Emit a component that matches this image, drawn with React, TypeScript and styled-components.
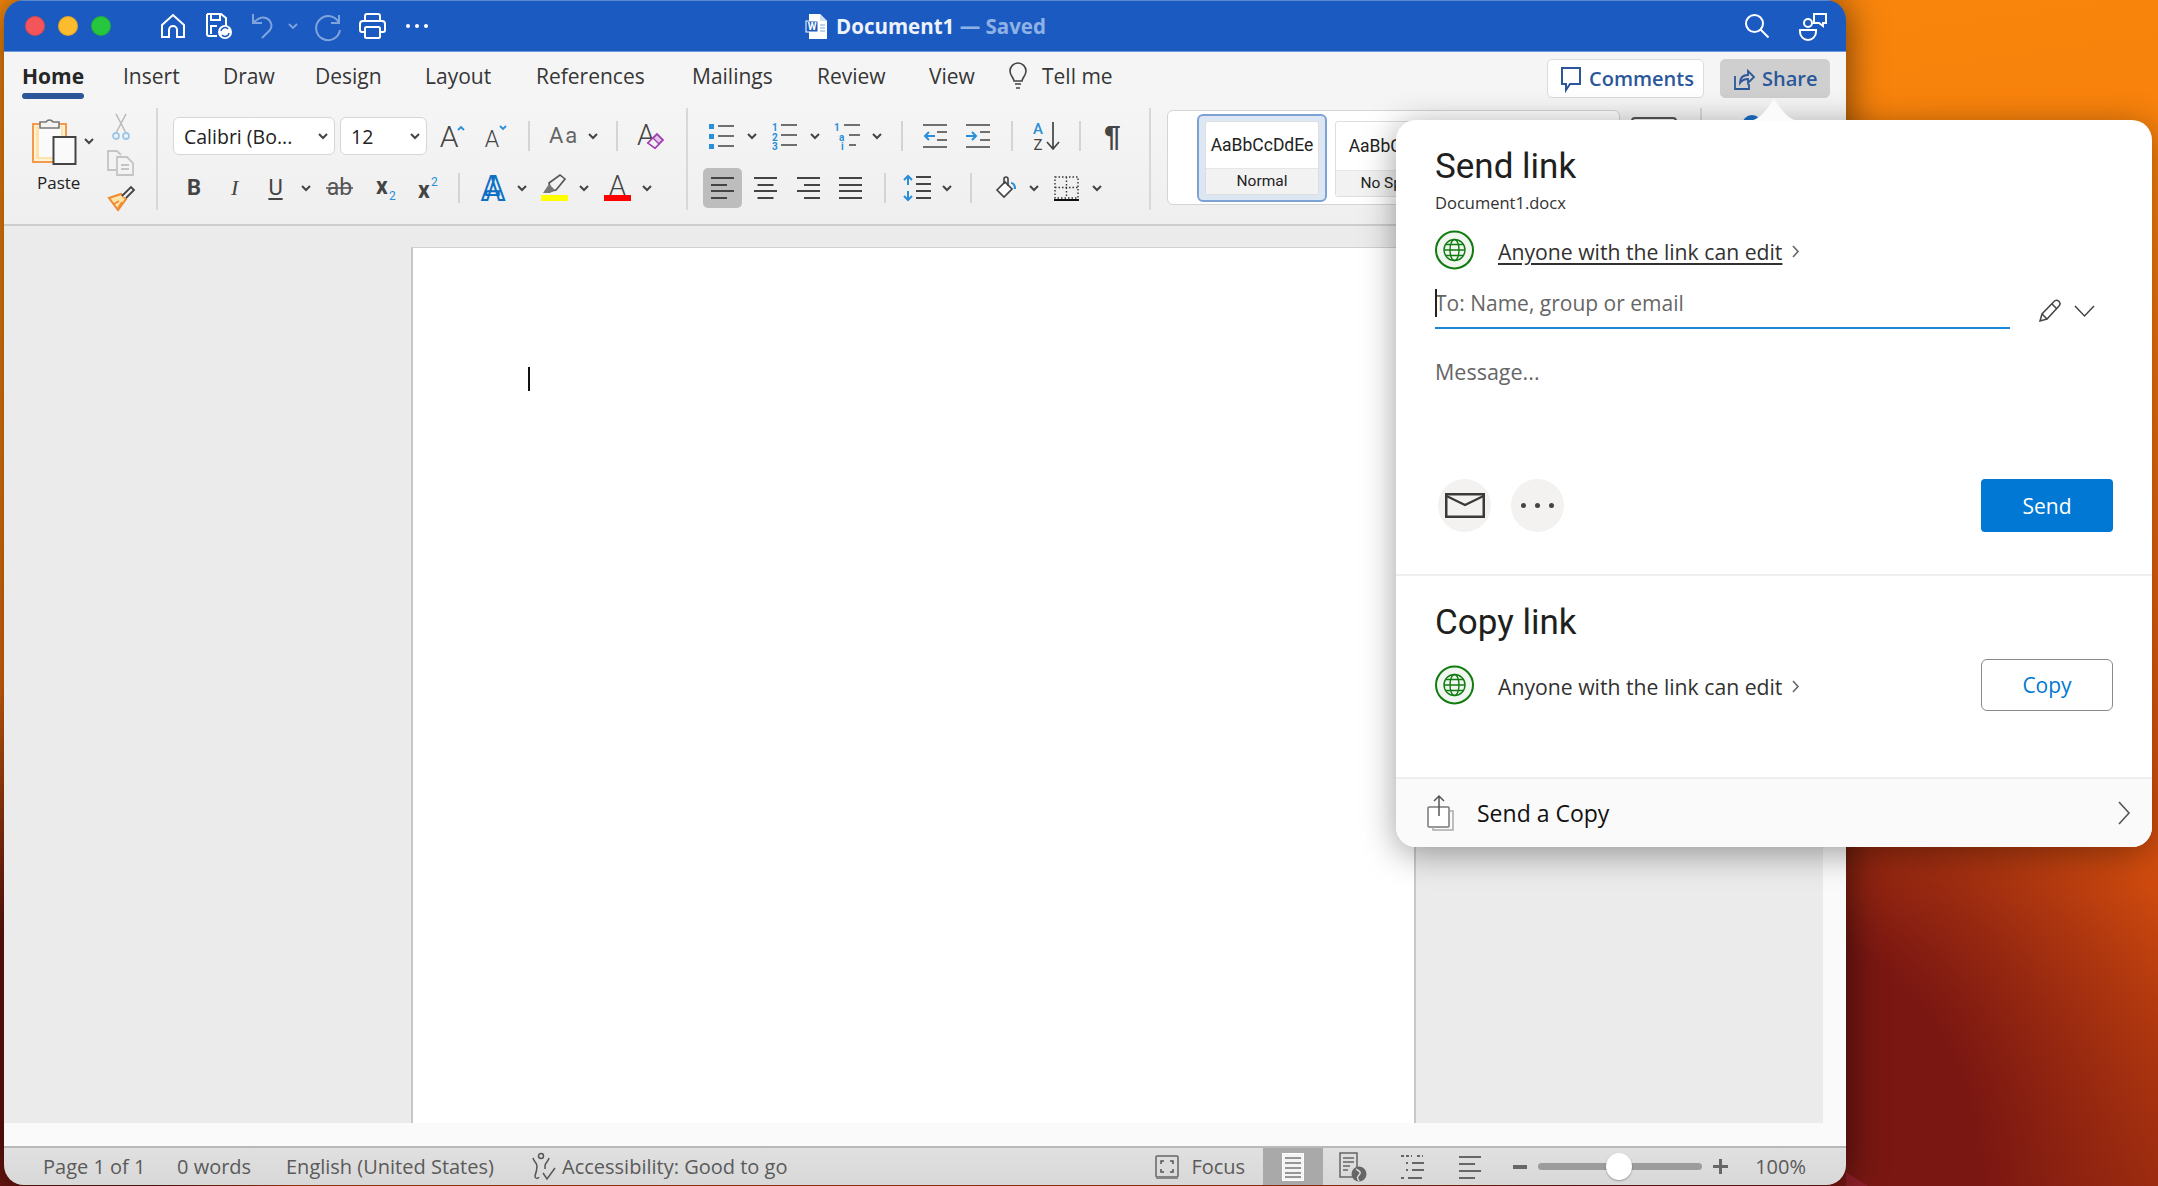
import React from "react";
import styled, { createGlobalStyle } from "styled-components";

const GlobalStyle = createGlobalStyle`
	html, body {
		margin: 0;
		padding: 0;
		width: 2158px;
		height: 1186px;
		overflow: hidden;
		font-family: "Open Sans", "Liberation Sans", sans-serif;
		color: #333;
	}
	svg {
		display: block;
		overflow: visible;
	}
	svg text {
		font-family: Roboto, "Liberation Sans", sans-serif;
	}
`;

const BLUE = "#2a8fd8";

/* small drawings */

function Chev() {
	return (
		<svg width="10" height="6" viewBox="0 0 10 6">
			<polyline points="1,1 5,5 9,1" fill="none" stroke="#444" strokeWidth="2" />
		</svg>
	);
}

function WordDoc() {
	return (
		<svg width="21" height="25" viewBox="0 0 21 25">
			<path d="M3 0h11l7 7v18H3z" fill="#fff" />
			<path d="M14 0v7h7" fill="#cfdcf2" />
			<rect x="0" y="7" width="12" height="11" fill="#1b5ac0" stroke="#fff" strokeWidth="1" />
			<text x="6" y="16" fontSize="10" fontWeight="700" fill="#fff" textAnchor="middle">W</text>
			<path d="M14 11h5M14 14h5M14 17h5" stroke="#7ea3df" strokeWidth="1.2" />
		</svg>
	);
}

function HomeIcon() {
	return (
		<svg width="24" height="24" viewBox="0 0 24 24" fill="none" stroke="#fff" strokeWidth="2">
			<path d="M1 11 12 1l11 10v12h-7v-7a4 4 0 0 0-8 0v7H1z" />
		</svg>
	);
}

function SaveIcon() {
	return (
		<svg width="26" height="26" viewBox="0 0 26 26" fill="none" stroke="#fff" strokeWidth="2">
			<path d="M1 1h14l5 4v8M11 23H3a2 2 0 0 1-2-2V1" />
			<path d="M5 1v6h9V1M5 21v-8h6" />
			<circle cx="19" cy="19" r="7" fill="#fff" stroke="none" />
			<path d="M15 18a4 4 0 0 1 7-2M23 20a4 4 0 0 1-7 2" stroke="#1b5ac0" strokeWidth="1.6" />
		</svg>
	);
}

function UndoIcon() {
	return (
		<svg width="21" height="26" viewBox="0 0 21 26" fill="none" stroke="#7fa3dd" strokeWidth="2">
			<path d="M1 1v9h9" />
			<path d="M1 10C5 6 9 3 14 5c5 2 7 8 4 12l-8 8" />
		</svg>
	);
}

function RedoIcon() {
	return (
		<svg width="26" height="26" viewBox="0 0 26 26" fill="none" stroke="#7fa3dd" strokeWidth="2">
			<path d="M24 2v8h-8" />
			<path d="M24 10A12 12 0 1 0 25 17" />
		</svg>
	);
}

function PrintIcon() {
	return (
		<svg width="27" height="26" viewBox="0 0 27 26" fill="none" stroke="#fff" strokeWidth="2">
			<path d="M6 8V3a2 2 0 0 1 2-2h11a2 2 0 0 1 2 2v5" />
			<path d="M6 19H3a2 2 0 0 1-2-2v-6a3 3 0 0 1 3-3h19a3 3 0 0 1 3 3v6a2 2 0 0 1-2 2h-3" />
			<rect x="6" y="14" width="15" height="11" rx="1.5" />
		</svg>
	);
}

function DotsIcon() {
	return (
		<svg width="22" height="4" viewBox="0 0 22 4" fill="#fff">
			<circle cx="2" cy="2" r="2" />
			<circle cx="11" cy="2" r="2" />
			<circle cx="20" cy="2" r="2" />
		</svg>
	);
}

function SearchIcon() {
	return (
		<svg width="24" height="24" viewBox="0 0 24 24" fill="none" stroke="#fff" strokeWidth="2">
			<circle cx="9.5" cy="9.5" r="8.5" />
			<path d="m15.5 15.5 8 8" />
		</svg>
	);
}

function PeopleIcon() {
	return (
		<svg width="28" height="27" viewBox="0 0 28 27" fill="none" stroke="#fff" strokeWidth="2">
			<path d="M15 1h12v9h-3v3l-4-3h-5z" />
			<circle cx="9" cy="10" r="4" />
			<path d="M1 17h16v2a7 7 0 0 1-16 0z" />
		</svg>
	);
}

function BulbIcon() {
	return (
		<svg width="18" height="26" viewBox="0 0 18 26" fill="none" stroke="#444" strokeWidth="1.6">
			<path d="M5 18c0-3-4-5-4-10a8 8 0 0 1 16 0c0 5-4 7-4 10z" />
			<path d="M6 21h6M7 25h4" />
		</svg>
	);
}

function CommentIcon() {
	return (
		<svg width="20" height="26" viewBox="0 0 20 26" fill="none" stroke="#2b579a" strokeWidth="2">
			<path d="M1 2h18v16H9l-4 6v-6H1z" />
		</svg>
	);
}

function ShareIcon() {
	return (
		<svg width="20" height="22" viewBox="0 0 20 22" fill="none" stroke="#2b579a" strokeWidth="1.8">
			<path d="M1 8v13h14v-5" />
			<path d="M6 15c0-6 4-8 8-8V3l6 6-6 6v-4c-4 0-6 1-8 4z" />
		</svg>
	);
}

function ClipboardIcon() {
	return (
		<svg width="44" height="49" viewBox="0 0 44 49">
			<rect x="1" y="8" width="33" height="38" fill="#fff3d6" stroke="#f39a4b" strokeWidth="2" />
			<rect x="4" y="10" width="27" height="33" fill="#fde3a7" />
			<rect x="7" y="11" width="22" height="30" fill="#fafafa" />
			<path d="M8 12V6h6a4 4 0 0 1 7 0h6v6z" fill="#f4f4f4" stroke="#777" strokeWidth="1.6" />
			<rect x="21.5" y="21" width="22" height="27" fill="#fafafa" stroke="#444" strokeWidth="2" />
		</svg>
	);
}

function CutIcon() {
	return (
		<svg width="18" height="26" viewBox="0 0 18 26" fill="none">
			<path d="M4 19 14 0M14 19 4 0" stroke="#bbb" strokeWidth="1.6" />
			<circle cx="4" cy="22" r="3" stroke="#9cc8e8" strokeWidth="1.8" />
			<circle cx="14" cy="22" r="3" stroke="#9cc8e8" strokeWidth="1.8" />
		</svg>
	);
}

function CopyIcon() {
	return (
		<svg width="27" height="26" viewBox="0 0 27 26" fill="none" stroke="#c4c4c4" strokeWidth="1.8">
			<path d="M9 20H1V1h9l4 4" />
			<path d="M10 7h10l6 6v12H10z" fill="#f3f3f3" />
			<path d="M14 15h8M14 19h8" />
		</svg>
	);
}

function PainterIcon() {
	return (
		<svg width="27" height="25" viewBox="0 0 27 25">
			<path d="M1 12 13 8l5 5-8 11z" fill="#fde3a7" stroke="#f08a33" strokeWidth="2" />
			<path d="M6 18l5-3M10 22l4-6" stroke="#f08a33" strokeWidth="1.6" />
			<path d="M14 10l9-9 3 3-8 8" fill="#f3f3f3" stroke="#444" strokeWidth="1.8" />
		</svg>
	);
}

function GrowIcon() {
	return (
		<svg width="24" height="22" viewBox="0 0 24 22">
			<text x="9" y="22" fontSize="30" fontWeight="300" fill="#444" textAnchor="middle">A</text>
			<polyline points="18,5 21,2 24,5" fill="none" stroke={BLUE} strokeWidth="1.8" />
		</svg>
	);
}

function ShrinkIcon() {
	return (
		<svg width="22" height="22" viewBox="0 0 22 22">
			<text x="7" y="22" fontSize="23" fontWeight="300" fill="#444" textAnchor="middle">A</text>
			<polyline points="15,1 18,4 21,1" fill="none" stroke={BLUE} strokeWidth="1.8" />
		</svg>
	);
}

function ClearIcon() {
	return (
		<svg width="27" height="26" viewBox="0 0 27 26">
			<text x="9" y="22" fontSize="29" fontWeight="300" fill="#444" textAnchor="middle">A</text>
			<path d="M11 20 20 11l6 6-8 8z" fill="#e3c6ea" stroke="#a042b0" strokeWidth="1.8" />
			<path d="M11 20l5-5 6 6-4 4z" fill="#f3f3f3" stroke="#a042b0" strokeWidth="1.4" />
		</svg>
	);
}

function StrikeIcon() {
	return (
		<svg width="27" height="22" viewBox="0 0 27 22">
			<text x="13.5" y="18" fontSize="23" fill="#555" textAnchor="middle">ab</text>
			<path d="M0 11h27" stroke="#555" strokeWidth="1.6" />
		</svg>
	);
}

function SubIcon() {
	return (
		<svg width="20" height="24" viewBox="0 0 20 24">
			<text x="0" y="18" fontSize="23" fontWeight="700" fill="#444">x</text>
			<text x="13" y="24" fontSize="12" fill={BLUE}>2</text>
		</svg>
	);
}

function SupIcon() {
	return (
		<svg width="20" height="24" viewBox="0 0 20 24">
			<text x="0" y="22" fontSize="23" fontWeight="700" fill="#444">x</text>
			<text x="13" y="10" fontSize="12" fill={BLUE}>2</text>
		</svg>
	);
}

function EffectsIcon() {
	return (
		<svg width="26" height="26" viewBox="0 0 26 26">
			<text x="13" y="25" fontSize="33" fontWeight="700" fill="#e8f2fb" stroke="#0f6fc2" strokeWidth="2" textAnchor="middle">A</text>
		</svg>
	);
}

function HighlightIcon() {
	return (
		<svg width="27" height="26" viewBox="0 0 27 26">
			<path d="M8 8 19 0l5 4-9 11-5 1z" fill="#f3f3f3" stroke="#555" strokeWidth="1.6" />
			<path d="M2 18l6-9 6 6-5 3z" fill="#777" />
			<rect x="0" y="20" width="27" height="6" fill="#ffff00" />
		</svg>
	);
}

function FontColorIcon() {
	return (
		<svg width="27" height="26" viewBox="0 0 27 26">
			<text x="13.5" y="20" fontSize="27" fontWeight="300" fill="#444" textAnchor="middle">A</text>
			<rect x="0" y="20" width="27" height="6" fill="#ff0000" />
		</svg>
	);
}

function BulletsIcon() {
	return (
		<svg width="25" height="25" viewBox="0 0 25 25">
			<rect x="0" y="0" width="5" height="5" fill={BLUE} />
			<rect x="0" y="10" width="5" height="5" fill={BLUE} />
			<rect x="0" y="20" width="5" height="5" fill={BLUE} />
			<path d="M9 2h16M9 12h16M9 22h16" stroke="#444" strokeWidth="1.7" />
		</svg>
	);
}

function NumbersIcon() {
	return (
		<svg width="25" height="26" viewBox="0 0 25 26">
			<g fill={BLUE} fontSize="10" fontWeight="700">
				<text x="0" y="8">1</text>
				<text x="0" y="18">2</text>
				<text x="0" y="27">3</text>
			</g>
			<path d="M9 2h16M9 12h16M9 22h16" stroke="#444" strokeWidth="1.7" />
		</svg>
	);
}

function MultiIcon() {
	return (
		<svg width="26" height="26" viewBox="0 0 26 26">
			<g fill={BLUE} fontSize="10" fontWeight="700">
				<text x="0" y="8">1</text>
				<text x="5" y="18">a</text>
				<text x="7" y="27">i</text>
			</g>
			<path d="M10 2h16M15 12h11M15 22h7" stroke="#444" strokeWidth="1.7" />
		</svg>
	);
}

function IndentIcon({ out }: { out?: boolean }) {
	return (
		<svg width="24" height="24" viewBox="0 0 24 24">
			<path d="M0 1h24M0 23h24M14 8h10M14 16h10" stroke="#444" strokeWidth="1.7" fill="none" />
			{out ? (
				<path d="M12 12H2m4-4-4 4 4 4" stroke={BLUE} strokeWidth="2" fill="none" />
			) : (
				<path d="M0 12h10M6 8l4 4-4 4" stroke={BLUE} strokeWidth="2" fill="none" />
			)}
		</svg>
	);
}

function SortIcon() {
	return (
		<svg width="28" height="28" viewBox="0 0 28 28">
			<text x="6" y="12" fontSize="15" fontWeight="500" fill={BLUE} textAnchor="middle">A</text>
			<text x="6" y="28" fontSize="15" fontWeight="400" fill="#444" textAnchor="middle">Z</text>
			<path d="M21 0v26M15 20l6 7 6-7" stroke="#444" strokeWidth="1.7" fill="none" />
		</svg>
	);
}

function AlignIcon({ kind }: { kind: "left" | "center" | "right" | "full" }) {
	const short = kind === "full" ? 23 : 16;
	const x1 = kind === "left" || kind === "full" ? 0 : kind === "center" ? 3.5 : 7;
	const x2 = x1 + short;
	return (
		<svg width="23" height="22" viewBox="0 0 23 22">
			<path
				d={`M0 1H23M${x1} 8H${x2}M0 14H23M${x1} 21H${x2}`}
				stroke="#444"
				strokeWidth="1.8"
				fill="none"
			/>
		</svg>
	);
}

function LineSpacingIcon() {
	return (
		<svg width="27" height="26" viewBox="0 0 27 26">
			<path d="M12 2h15M12 9h15M12 16h15M12 23h15" stroke="#444" strokeWidth="1.8" />
			<path d="M4 1v9M0 5l4-4 4 4M4 16v9M0 21l4 4 4-4" stroke={BLUE} strokeWidth="2" fill="none" />
		</svg>
	);
}

function ShadingIcon() {
	return (
		<svg width="20" height="22" viewBox="0 0 20 22">
			<path d="M1 13 9 5l7 7-8 8z" fill="#fff" stroke="#444" strokeWidth="1.7" />
			<path d="M8 7V2a2 2 0 0 1 4 0v7" fill="none" stroke="#444" strokeWidth="1.6" />
			<path d="M15 6c2 0 4 2 4 6" fill="none" stroke={BLUE} strokeWidth="2.2" />
		</svg>
	);
}

function BorderIcon() {
	return (
		<svg width="25" height="25" viewBox="0 0 25 25" fill="none">
			<path d="M1 1h23v21H1zM12.5 1v21M1 11.5h23" stroke="#333" strokeWidth="1.4" strokeDasharray="1.5 2" />
			<path d="M0 24h25" stroke="#111" strokeWidth="2" />
		</svg>
	);
}

function GlobeIcon() {
	return (
		<svg width="39" height="40" viewBox="0 0 39 40" fill="none">
			<circle cx="19.5" cy="20" r="18.5" fill="#f1f6f1" stroke="#107c10" strokeWidth="2" />
			<g stroke="#107c10" strokeWidth="1.4">
				<circle cx="19.5" cy="20" r="10.5" />
				<ellipse cx="19.5" cy="20" rx="4.5" ry="10.5" />
				<path d="M9 20h21M10.5 14.5h18M10.5 25.5h18" />
			</g>
		</svg>
	);
}

function ThinChevronRight({ w, h, color }: { w: number; h: number; color: string }) {
	return (
		<svg width={w} height={h} viewBox={`0 0 ${w} ${h}`}>
			<polyline points={`1,1 ${w - 1},${h / 2} 1,${h - 1}`} fill="none" stroke={color} strokeWidth="1.6" />
		</svg>
	);
}

function PencilIcon() {
	return (
		<svg width="22" height="22" viewBox="0 0 22 22" fill="none" stroke="#444" strokeWidth="1.5">
			<path d="M1 21l2-7L15 1.500a2.500 2.500 0 0 1 5 4.500L8 19z" />
			<path d="M3 14l5 5M13 4l5 5" />
		</svg>
	);
}

function MailIcon() {
	return (
		<svg width="40" height="25" viewBox="0 0 40 25" fill="none" stroke="#3a3a3a">
			<rect x="1.250" y="1.250" width="37.500" height="22.500" strokeWidth="2.500" />
			<path d="M1.500 3 20 12 38.500 3" strokeWidth="2.200" />
		</svg>
	);
}

function SendCopyIcon() {
	return (
		<svg width="27" height="36" viewBox="0 0 27 36" fill="none" stroke="#777" strokeWidth="1.5">
			<rect x="1" y="12" width="21" height="20" rx="1" fill="#fff" />
			<path d="M23 16h3v19H6v-3" stroke="#aaa" />
			<path d="M12 21V1M7 6l5-5 5 5" stroke="#555" />
		</svg>
	);
}

function A11yIcon() {
	return (
		<svg width="24" height="28" viewBox="0 0 24 28" fill="none" stroke="#555" strokeWidth="1.5">
			<circle cx="9" cy="3" r="2.500" />
			<path d="M1 5c1 4 4 5 4 8 0 4-1 7-2 10 0 3 3 3 4 1M17 5c-1 4-4 5-4 8v3" />
			<path d="M11 20l4 6 8-11" />
		</svg>
	);
}

function FocusIcon() {
	return (
		<svg width="24" height="24" viewBox="0 0 24 24" fill="none">
			<rect x="1" y="1" width="22" height="21" rx="1" stroke="#666" strokeWidth="1.5" />
			<path d="M6 9V6h3M15 6h3v3M18 14v3h-3M9 17H6v-3" stroke="#555" strokeWidth="1.500" />
			<path d="M1 23.500h22" stroke="#888" strokeWidth="1" />
		</svg>
	);
}

function PrintLayoutIcon() {
	return (
		<svg width="22" height="28" viewBox="0 0 22 28">
			<rect x="0.500" y="0.500" width="21" height="27" fill="#f4f4f4" stroke="#fff" />
			<path d="M3 5h16M3 10h16M3 15h16M3 20h16M3 24h16" stroke="#777" strokeWidth="1.6" />
		</svg>
	);
}

function WebLayoutIcon() {
	return (
		<svg width="28" height="30" viewBox="0 0 28 30" fill="none">
			<path d="M1 1h17v24H1z" stroke="#666" strokeWidth="1.5" />
			<path d="M4 6h11M4 10h11M4 14h7M4 18h5" stroke="#666" strokeWidth="1.500" />
			<circle cx="20" cy="22" r="7.500" fill="#666" />
			<path d="M17 17c3 2 6 3 3 6s-1 4 0 6" stroke="#ddd" strokeWidth="1.500" />
		</svg>
	);
}

function OutlineIcon() {
	return (
		<svg width="26" height="26" viewBox="0 0 26 26" fill="none" stroke="#666" strokeWidth="1.800">
			<path d="M2 2h11M18 2h6" strokeDasharray="3 2" />
			<path d="M7 9h2M13 9h12M7 16h2M13 16h12M2 24h3M9 24h14" />
		</svg>
	);
}

function DraftIcon() {
	return (
		<svg width="22" height="24" viewBox="0 0 22 24" fill="none" stroke="#666" strokeWidth="1.800">
			<path d="M0 2h22M0 9h16M0 16h22M0 23h16" />
		</svg>
	);
}

/* page layout */

const Desktop = styled.div`
	position: relative;
	width: 2158px;
	height: 1186px;
	overflow: hidden;
	padding-left: 4px;
	box-sizing: border-box;
	background:
		radial-gradient(ellipse 440px 560px at 1780px 1186px, #7a1712 45%, rgba(122, 23, 18, 0) 100%),
		radial-gradient(ellipse 300px 500px at 0 1186px, #6a1410 50%, rgba(106, 20, 16, 0) 100%),
		linear-gradient(172deg, #fc8c0c 0%, #f7800c 32%, #dc530e 72%, #a8320e 100%);
`;

const WallpaperFold = styled.div`
	position: absolute;
	left: 1846px;
	top: 1172px;
	width: 22px;
	height: 14px;
	background: #8e1f28;
	clip-path: polygon(0 0, 100% 100%, 0 100%);
`;

const Window = styled.div`
	position: relative;
	width: 1842px;
	height: 1185px;
	border-radius: 20px;
	overflow: hidden;
	display: flex;
	flex-direction: column;
	box-shadow: 0 0 38px rgba(0, 0, 0, 0.6);
`;

const TitleBar = styled.div`
	flex: none;
	background: #1b5ac0;
	border-top: 1px solid #5b8ad4;
	border-bottom: 1px solid #6f9ade;
	box-sizing: border-box;
	height: 52px;
	display: grid;
	grid-template-columns: 1fr auto 1fr;
	align-items: center;
	padding: 0 19px 0 21px;
`;

const TitleLeft = styled.div`
	display: flex;
	align-items: center;
`;

const Light = styled.span<{ $c: string; $ml?: number }>`
	width: 20px;
	height: 20px;
	border-radius: 50%;
	background: ${(p) => p.$c};
	margin-left: ${(p) => p.$ml ?? 0}px;
	box-shadow: inset 0 0 0 1px rgba(0, 0, 0, 0.12);
`;

const Qat = styled.span<{ $ml: number }>`
	display: flex;
	margin-left: ${(p) => p.$ml}px;
`;

const TitleCenter = styled.div`
	display: flex;
	align-items: center;
	font-size: 20.5px;
	font-weight: 700;
	color: #eef3fb;
	gap: 9px;
`;

const Saved = styled.span`
	color: #8fb2e6;
`;

const TitleRight = styled.div`
	display: flex;
	justify-content: flex-end;
	align-items: center;
	gap: 30px;
`;

const TabsBar = styled.div`
	height: 52px;
	flex: none;
	background: #f5f5f5;
	display: flex;
	padding: 0 16px 0 18px;
`;

const Tab = styled.div<{ $active?: boolean; $w: number }>`
	position: relative;
	width: ${(p) => p.$w}px;
	height: 47px;
	line-height: 48px;
	font-size: 21px;
	white-space: nowrap;
	color: ${(p) => (p.$active ? "#262626" : "#363636")};
	font-weight: ${(p) => (p.$active ? 700 : 400)};

	${(p) =>
		p.$active &&
		`
		&::after {
			content: "";
			position: absolute;
			left: 0;
			width: 62px;
			bottom: 0;
			height: 6px;
			border-radius: 3px;
			background: #2b579a;
		}
	`}
`;

const TellMe = styled.div`
	display: flex;
	align-items: center;
	gap: 15px;
	height: 47px;
	font-size: 21px;
	color: #363636;
`;

const TabActions = styled.div`
	margin-left: auto;
	display: flex;
	gap: 16px;
	padding-top: 7px;
`;

const ActionButton = styled.div<{ $w: number; $pressed?: boolean }>`
	width: ${(p) => p.$w}px;
	height: 39px;
	box-sizing: border-box;
	border-radius: 5px;
	display: flex;
	align-items: center;
	gap: 8px;
	padding-left: 13px;
	font-size: 20px;
	font-weight: 600;
	color: #2b579a;
	background: ${(p) => (p.$pressed ? "#cfcfcf" : "#fff")};
	border: 1.5px solid ${(p) => (p.$pressed ? "#cfcfcf" : "#dcdcdc")};
`;

const Ribbon = styled.div`
	height: 122px;
	flex: none;
	box-sizing: border-box;
	background: linear-gradient(#f5f5f5, #efefef);
	border-bottom: 2px solid #cdcdcd;
	display: flex;
	padding-top: 4px;
`;

const GroupSep = styled.div<{ $ml?: number }>`
	width: 2px;
	height: 102px;
	background: #d8d8d8;
	flex: none;
	margin-left: ${(p) => p.$ml ?? 0}px;
`;

const ClipboardGroup = styled.div`
	width: 152px;
	flex: none;
	display: flex;
	padding-left: 28px;
	box-sizing: border-box;
`;

const PasteColumn = styled.div`
	width: 75px;
	flex: none;
	display: flex;
	flex-direction: column;
`;

const PasteTop = styled.div`
	display: flex;
	align-items: center;
	gap: 8px;
	padding-top: 8px;
`;

const PasteLabel = styled.div`
	font-size: 17px;
	line-height: 22px;
	margin: 7px 0 0 5px;
	color: #222;
`;

const SmallTools = styled.div`
	display: flex;
	flex-direction: column;
	padding-top: 6px;
	gap: 10px;
	align-items: flex-start;
`;

const SmallTool = styled.span<{ $ml?: number }>`
	display: flex;
	margin-left: ${(p) => p.$ml ?? 0}px;
`;

const ToolGroup = styled.div<{ $w: number; $ml?: number }>`
	width: ${(p) => p.$w}px;
	flex: none;
	margin-left: ${(p) => p.$ml ?? 0}px;
	padding-top: 2px;
`;

const ToolRow = styled.div`
	height: 52px;
	display: flex;
	align-items: center;
`;

const Slot = styled.span<{ $ml?: number }>`
	display: flex;
	align-items: center;
	flex: none;
	margin-left: ${(p) => p.$ml ?? 0}px;
`;

const LetterTool = styled(Slot)<{ $italic?: boolean; $bold?: boolean; $under?: boolean; $soft?: boolean }>`
	font-size: 22px;
	line-height: 26px;
	color: ${(p) => (p.$soft ? "#666" : "#444")};
	font-family: ${(p) => (p.$italic ? '"Liberation Serif", serif' : "Roboto, sans-serif")};
	font-style: ${(p) => (p.$italic ? "italic" : "normal")};
	font-weight: ${(p) => (p.$bold ? 700 : 400)};
	letter-spacing: ${(p) => (p.$soft ? "2px" : "0")};
	text-decoration: ${(p) => (p.$under ? "underline" : "none")};
	text-underline-offset: 3px;
`;

const MiniSep = styled.span<{ $ml: number }>`
	width: 2px;
	height: 30px;
	flex: none;
	background: #d4d4d4;
	margin-left: ${(p) => p.$ml}px;
`;

const Select = styled.div<{ $w: number; $ml?: number }>`
	width: ${(p) => p.$w}px;
	height: 38px;
	box-sizing: border-box;
	flex: none;
	margin-left: ${(p) => p.$ml ?? 0}px;
	display: flex;
	align-items: center;
	justify-content: space-between;
	padding: 0 6px 0 10px;
	background: #fff;
	border: 1.5px solid #d6d6d6;
	border-radius: 6px;
	font-size: 19.5px;
	color: #222;
`;

const ActiveAlign = styled(Slot)`
	width: 39px;
	height: 40px;
	justify-content: center;
	border-radius: 5px;
	background: #bdbdbd;
`;

const Pilcrow = styled(Slot)`
	font-family: "Liberation Sans", sans-serif;
	font-size: 30px;
	font-weight: 700;
	color: #444;
	line-height: 30px;
`;

const Gallery = styled.div`
	width: 453px;
	height: 95px;
	flex: none;
	box-sizing: border-box;
	margin: 2px 0 0 16px;
	padding: 3px 0 0 29px;
	background: #fff;
	border: 1.5px solid #d4d4d4;
	border-radius: 6px;
	display: flex;
	gap: 8px;
`;

const StyleFrame = styled.div<{ $selected?: boolean }>`
	width: 130px;
	height: 88px;
	box-sizing: border-box;
	padding: ${(p) => (p.$selected ? "5px 6px" : "7px 0 0 0")};
	flex: none;
	border-radius: 6px;
	${(p) => p.$selected && "background: #dde6f3; border: 2px solid #7fa2d4;"}
`;

const StyleCard = styled.div`
	height: 100%;
	max-height: 76px;
	box-sizing: border-box;
	border-radius: 3px;
	border: 1px solid #dedede;
	background: #fff;
	display: flex;
	flex-direction: column;
	overflow: hidden;
`;

const StyleSample = styled.div`
	flex: 1;
	display: flex;
	align-items: center;
	justify-content: center;
	font-family: Roboto, sans-serif;
	font-size: 17.5px;
	color: #222;
	white-space: nowrap;
	overflow: hidden;
`;

const StyleName = styled.div`
	height: 25px;
	line-height: 25px;
	flex: none;
	text-align: center;
	font-family: Roboto, sans-serif;
	font-size: 15.5px;
	color: #222;
	background: #f2f2f2;
	border-top: 1px solid #e6e6e6;
`;

const PaneButton = styled.div`
	width: 46px;
	height: 30px;
	margin: 9px 0 0 11px;
	flex: none;
	box-sizing: border-box;
	border: 2px solid #555;
	border-radius: 4px;
	background: #f4f4f4;
`;

const PaneSep = styled(GroupSep)`
	margin-left: 23px;
`;

const BlueBlob = styled.div`
	width: 20px;
	height: 20px;
	margin: 7px 0 0 40px;
	flex: none;
	border-radius: 50%;
	background: #1b6fc6;
`;

const DocArea = styled.div`
	flex: 1;
	min-height: 0;
	display: flex;
	background: #fafafa;
`;

const Canvas = styled.div`
	flex: 1;
	background: #ebebeb;
	padding: 21px 0 0 407px;
	display: flex;
`;

const Page = styled.div`
	width: 1005px;
	box-sizing: border-box;
	background: #fff;
	border-left: 2px solid #c8c8c8;
	border-right: 2px solid #c8c8c8;
	border-top: 1px solid #d0d0d0;
	padding: 119px 0 0 115px;
`;

const Caret = styled.div`
	width: 2px;
	height: 24px;
	background: #111;
`;

const Scrollbar = styled.div`
	width: 23px;
	flex: none;
`;

const HScroll = styled.div`
	height: 23px;
	flex: none;
	background: #fafafa;
`;

const StatusBar = styled.div`
	height: 39px;
	flex: none;
	box-sizing: border-box;
	border-top: 2px solid #b9b9b9;
	background: linear-gradient(#e0e0e0, #d8d8d8);
	display: flex;
	align-items: stretch;
	font-size: 20px;
	color: #5a5a5a;
	padding: 0 40px 0 39px;
`;

const StatusItem = styled.div<{ $w?: number; $ml?: number }>`
	display: flex;
	align-items: center;
	gap: 6px;
	flex: none;
	white-space: nowrap;
	width: ${(p) => (p.$w ? `${p.$w}px` : "auto")};
	margin-left: ${(p) => p.$ml ?? 0}px;
`;

const FocusItem = styled(StatusItem)`
	gap: 12px;
	margin-left: auto;
`;

const ViewButton = styled.div<{ $w?: number; $active?: boolean; $ml?: number }>`
	width: ${(p) => p.$w ?? 60}px;
	flex: none;
	margin-left: ${(p) => p.$ml ?? 0}px;
	display: flex;
	align-items: center;
	justify-content: center;
	background: ${(p) => (p.$active ? "#a9a9a9" : "transparent")};
`;

const ZoomSign = styled.div<{ $ml: number }>`
	flex: none;
	margin-left: ${(p) => p.$ml}px;
	display: flex;
	align-items: center;
`;

const Slider = styled.div`
	position: relative;
	width: 164px;
	height: 7px;
	flex: none;
	align-self: center;
	margin-left: 11px;
	border-radius: 4px;
	background: #9c9c9c;
`;

const SliderThumb = styled.div`
	position: absolute;
	left: 68px;
	top: -10px;
	width: 26px;
	height: 27px;
	border-radius: 50%;
	background: #fff;
	box-shadow: 0 1px 2px rgba(0, 0, 0, 0.3);
`;

/* share popover */

const Popover = styled.div`
	position: absolute;
	left: 1396px;
	top: 120px;
	width: 756px;
	height: 727px;
	display: flex;
	flex-direction: column;
	background: #fff;
	border-radius: 20px;
	box-shadow: 0 6px 34px rgba(0, 0, 0, 0.38);
	color: #201f1e;
`;

const PopoverArrow = styled.svg`
	position: absolute;
	left: 352px;
	top: -21px;
`;

const SendSection = styled.section`
	height: 456px;
	flex: none;
	box-sizing: border-box;
	padding: 25px 39px 0 39px;
	border-bottom: 2px solid #eee;
`;

const CopySection = styled.section`
	flex: 1;
	padding: 25px 39px 0 39px;
`;

const Heading = styled.h2`
	margin: 0;
	font-family: Roboto, sans-serif;
	font-size: 35px;
	line-height: 44px;
	font-weight: 400;
	color: #201f1e;
`;

const FileName = styled.div`
	margin-top: 4px;
	font-size: 16.5px;
	line-height: 20px;
	color: #323130;
`;

const LinkRow = styled.div<{ $mt: number }>`
	margin-top: ${(p) => p.$mt}px;
	display: flex;
	align-items: center;
	font-size: 21.2px;
	color: #323130;
`;

const LinkText = styled.span<{ $under?: boolean }>`
	margin-left: 24px;
	padding-top: 3px;
	text-decoration: ${(p) => (p.$under ? "underline" : "none")};
	text-underline-offset: 3px;
`;

const ChevronGap = styled.span`
	margin-left: 10px;
	padding-top: 3px;
`;

const RecipientRow = styled.div`
	margin-top: 14px;
	display: flex;
	align-items: flex-end;
`;

const RecipientField = styled.div`
	position: relative;
	width: 575px;
	height: 45px;
	box-sizing: border-box;
	border-bottom: 2px solid #1a86d8;
	line-height: 38px;
	font-size: 21px;
	color: #666;
`;

const FieldCaret = styled.span`
	position: absolute;
	left: 0;
	top: 5px;
	width: 1.5px;
	height: 28px;
	background: #222;
`;

const RowIcon = styled.span<{ $ml: number }>`
	display: flex;
	align-items: center;
	margin-left: ${(p) => p.$ml}px;
	height: 36px;
`;

const MessageBox = styled.div`
	margin-top: 31px;
	line-height: 24px;
	font-size: 21.5px;
	color: #666;
`;

const ActionRow = styled.div`
	margin-top: 95px;
	display: flex;
	align-items: center;
	padding-left: 3px;
	gap: 20px;
`;

const RoundButton = styled.div`
	width: 53px;
	height: 53px;
	border-radius: 50%;
	background: #f3f2f1;
	display: flex;
	align-items: center;
	justify-content: center;
	gap: 9px;
`;

const Dot = styled.span`
	width: 5px;
	height: 5px;
	border-radius: 50%;
	background: #444;
`;

const PrimaryButton = styled.div`
	margin-left: auto;
	width: 132px;
	height: 53px;
	display: flex;
	align-items: center;
	justify-content: center;
	border-radius: 4px;
	background: #0078d4;
	color: #fff;
	font-size: 21px;
`;

const OutlineButton = styled.div`
	margin-left: auto;
	width: 132px;
	height: 52px;
	box-sizing: border-box;
	display: flex;
	align-items: center;
	justify-content: center;
	border: 1.5px solid #8a8a8a;
	border-radius: 6px;
	color: #0078d4;
	font-size: 21px;
`;

const FooterRow = styled.div`
	height: 70px;
	flex: none;
	box-sizing: border-box;
	border-top: 2px solid #eee;
	border-radius: 0 0 20px 20px;
	background: #fafafa;
	display: flex;
	align-items: center;
	padding: 0 22px 0 31px;
	font-size: 23px;
	color: #111;
	gap: 23px;
`;

const FooterChevron = styled.span`
	margin-left: auto;
`;

function App() {
	return (
		<Desktop>
			<GlobalStyle />
			<WallpaperFold />
			<Window>
				<TitleBar>
					<TitleLeft>
						<Light $c="#f4555a" />
						<Light $c="#fdbb2e" $ml={13} />
						<Light $c="#27c63f" $ml={13} />
						<Qat $ml={50}><HomeIcon /></Qat>
						<Qat $ml={21}><SaveIcon /></Qat>
						<Qat $ml={20}><UndoIcon /></Qat>
						<Qat $ml={15}>
							<svg width="10" height="6" viewBox="0 0 10 6">
								<polyline points="1,1 5,5 9,1" fill="none" stroke="#7fa3dd" strokeWidth="1.8" />
							</svg>
						</Qat>
						<Qat $ml={17}><RedoIcon /></Qat>
						<Qat $ml={18}><PrintIcon /></Qat>
						<Qat $ml={20}><DotsIcon /></Qat>
					</TitleLeft>
					<TitleCenter>
						<WordDoc />
						<span>
							Document1 <Saved>— Saved</Saved>
						</span>
					</TitleCenter>
					<TitleRight>
						<SearchIcon />
						<PeopleIcon />
					</TitleRight>
				</TitleBar>

				<TabsBar>
					<Tab $active $w={101}>Home</Tab>
					<Tab $w={100}>Insert</Tab>
					<Tab $w={92}>Draw</Tab>
					<Tab $w={110}>Design</Tab>
					<Tab $w={111}>Layout</Tab>
					<Tab $w={156}>References</Tab>
					<Tab $w={125}>Mailings</Tab>
					<Tab $w={112}>Review</Tab>
					<Tab $w={80}>View</Tab>
					<TellMe>
						<BulbIcon />
						Tell me
					</TellMe>
					<TabActions>
						<ActionButton $w={157}>
							<CommentIcon />
							Comments
						</ActionButton>
						<ActionButton $w={110} $pressed>
							<ShareIcon />
							Share
						</ActionButton>
					</TabActions>
				</TabsBar>

				<Ribbon>
					<ClipboardGroup>
						<PasteColumn>
							<PasteTop>
								<ClipboardIcon />
								<Chev />
							</PasteTop>
							<PasteLabel>Paste</PasteLabel>
						</PasteColumn>
						<SmallTools>
							<SmallTool $ml={5}><CutIcon /></SmallTool>
							<SmallTool><CopyIcon /></SmallTool>
							<SmallTool $ml={1}><PainterIcon /></SmallTool>
						</SmallTools>
					</ClipboardGroup>
					<GroupSep />

					<ToolGroup $w={513} $ml={15}>
						<ToolRow>
							<Select $w={162}>Calibri (Bo...<Chev /></Select>
							<Select $w={87} $ml={5}>12<Chev /></Select>
							<Slot $ml={13}><GrowIcon /></Slot>
							<Slot $ml={21}><ShrinkIcon /></Slot>
							<MiniSep $ml={21} />
							<LetterTool $ml={19} $soft>Aa</LetterTool>
							<Slot $ml={9}><Chev /></Slot>
							<MiniSep $ml={18} />
							<Slot $ml={19}><ClearIcon /></Slot>
						</ToolRow>
						<ToolRow>
							<LetterTool $ml={14} $bold>B</LetterTool>
							<LetterTool $ml={30} $italic>I</LetterTool>
							<LetterTool $ml={30} $under>U</LetterTool>
							<Slot $ml={18}><Chev /></Slot>
							<Slot $ml={15}><StrikeIcon /></Slot>
							<Slot $ml={23}><SubIcon /></Slot>
							<Slot $ml={22}><SupIcon /></Slot>
							<MiniSep $ml={20} />
							<Slot $ml={20}><EffectsIcon /></Slot>
							<Slot $ml={11}><Chev /></Slot>
							<Slot $ml={14}><HighlightIcon /></Slot>
							<Slot $ml={11}><Chev /></Slot>
							<Slot $ml={15}><FontColorIcon /></Slot>
							<Slot $ml={11}><Chev /></Slot>
						</ToolRow>
					</ToolGroup>
					<GroupSep />

					<ToolGroup $w={461}>
						<ToolRow>
							<Slot $ml={21}><BulletsIcon /></Slot>
							<Slot $ml={13}><Chev /></Slot>
							<Slot $ml={15}><NumbersIcon /></Slot>
							<Slot $ml={13}><Chev /></Slot>
							<Slot $ml={14}><MultiIcon /></Slot>
							<Slot $ml={12}><Chev /></Slot>
							<MiniSep $ml={19} />
							<Slot $ml={20}><IndentIcon out /></Slot>
							<Slot $ml={19}><IndentIcon /></Slot>
							<MiniSep $ml={21} />
							<Slot $ml={19}><SortIcon /></Slot>
							<MiniSep $ml={19} />
							<Pilcrow $ml={23}>¶</Pilcrow>
						</ToolRow>
						<ToolRow>
							<ActiveAlign $ml={15}><AlignIcon kind="left" /></ActiveAlign>
							<Slot $ml={12}><AlignIcon kind="center" /></Slot>
							<Slot $ml={20}><AlignIcon kind="right" /></Slot>
							<Slot $ml={19}><AlignIcon kind="full" /></Slot>
							<MiniSep $ml={22} />
							<Slot $ml={18}><LineSpacingIcon /></Slot>
							<Slot $ml={11}><Chev /></Slot>
							<MiniSep $ml={18} />
							<Slot $ml={24}><ShadingIcon /></Slot>
							<Slot $ml={13}><Chev /></Slot>
							<Slot $ml={15}><BorderIcon /></Slot>
							<Slot $ml={13}><Chev /></Slot>
						</ToolRow>
					</ToolGroup>
					<GroupSep />

					<Gallery>
						<StyleFrame $selected>
							<StyleCard>
								<StyleSample>AaBbCcDdEe</StyleSample>
								<StyleName>Normal</StyleName>
							</StyleCard>
						</StyleFrame>
						<StyleFrame>
							<StyleCard>
								<StyleSample>AaBbCcDdEe</StyleSample>
								<StyleName>No Spacing</StyleName>
							</StyleCard>
						</StyleFrame>
					</Gallery>
					<PaneButton />
					<PaneSep />
					<BlueBlob />
				</Ribbon>

				<DocArea>
					<Canvas>
						<Page>
							<Caret />
						</Page>
					</Canvas>
					<Scrollbar />
				</DocArea>
				<HScroll />

				<StatusBar>
					<StatusItem $w={134}>Page 1 of 1</StatusItem>
					<StatusItem $w={109}>0 words</StatusItem>
					<StatusItem $w={246}>English (United States)</StatusItem>
					<StatusItem>
						<A11yIcon />
						Accessibility: Good to go
					</StatusItem>
					<FocusItem>
						<FocusIcon />
						Focus
					</FocusItem>
					<ViewButton $ml={18} $active><PrintLayoutIcon /></ViewButton>
					<ViewButton $ml={8} $w={44}><WebLayoutIcon /></ViewButton>
					<ViewButton $ml={16} $w={42}><OutlineIcon /></ViewButton>
					<ViewButton $ml={15} $w={44}><DraftIcon /></ViewButton>
					<ZoomSign $ml={21}>
						<svg width="14" height="4" viewBox="0 0 14 4">
							<rect width="14" height="4" fill="#666" />
						</svg>
					</ZoomSign>
					<Slider>
						<SliderThumb />
					</Slider>
					<ZoomSign $ml={11}>
						<svg width="15" height="15" viewBox="0 0 15 15">
							<path d="M7.500 0v15M0 7.500h15" stroke="#666" strokeWidth="3" />
						</svg>
					</ZoomSign>
					<StatusItem $ml={27}>100%</StatusItem>
				</StatusBar>
			</Window>

			<Popover>
				<PopoverArrow width="52" height="22" viewBox="0 0 52 22">
					<path d="M0 22C10 21 15 16 26 0 37 16 42 21 52 22z" fill="#fbfbfb" />
				</PopoverArrow>
				<SendSection>
					<Heading>Send link</Heading>
					<FileName>Document1.docx</FileName>
					<LinkRow $mt={17}>
						<GlobeIcon />
						<LinkText $under>Anyone with the link can edit</LinkText>
						<ChevronGap>
							<ThinChevronRight w={7} h={13} color="#666" />
						</ChevronGap>
					</LinkRow>
					<RecipientRow>
						<RecipientField>
							<FieldCaret />
							To: Name, group or email
						</RecipientField>
						<RowIcon $ml={29}><PencilIcon /></RowIcon>
						<RowIcon $ml={13}>
							<svg width="21" height="12" viewBox="0 0 21 12">
								<polyline points="1,1 10.500,11 20,1" fill="none" stroke="#444" strokeWidth="1.500" />
							</svg>
						</RowIcon>
					</RecipientRow>
					<MessageBox>Message...</MessageBox>
					<ActionRow>
						<RoundButton><MailIcon /></RoundButton>
						<RoundButton>
							<Dot />
							<Dot />
							<Dot />
						</RoundButton>
						<PrimaryButton>Send</PrimaryButton>
					</ActionRow>
				</SendSection>

				<CopySection>
					<Heading>Copy link</Heading>
					<LinkRow $mt={14}>
						<GlobeIcon />
						<LinkText>Anyone with the link can edit</LinkText>
						<ChevronGap>
							<ThinChevronRight w={7} h={13} color="#666" />
						</ChevronGap>
						<OutlineButton>Copy</OutlineButton>
					</LinkRow>
				</CopySection>

				<FooterRow>
					<SendCopyIcon />
					Send a Copy
					<FooterChevron>
						<ThinChevronRight w={12} h={24} color="#555" />
					</FooterChevron>
				</FooterRow>
			</Popover>
		</Desktop>
	);
}

export default App;
